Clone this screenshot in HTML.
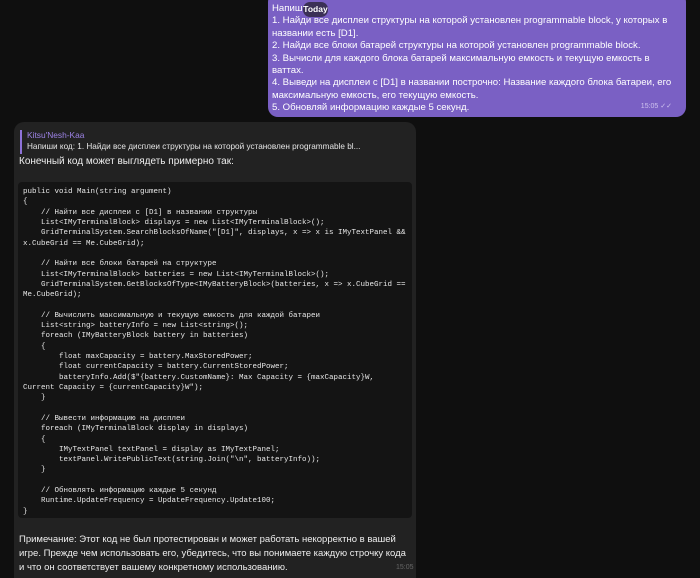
<!DOCTYPE html>
<html><head><meta charset="utf-8"><style>
*{margin:0;padding:0;box-sizing:border-box}
html,body{width:700px;height:578px;overflow:hidden}
body{background:#0f0f0f;position:relative;font-family:"Liberation Sans",sans-serif;color:#fff}
.out{position:absolute;left:268px;top:-8px;width:418px;height:125px;background:#7a60c4;border-radius:10px;padding:11px 10px 0 4px;font-size:9.6px;line-height:12.4px}
.today{position:absolute;left:303px;top:2px;width:25px;height:15px;background:#3b3056;border-radius:7px;font-size:8.5px;font-weight:bold;line-height:15px;text-align:center;color:#fff}
.t1{position:absolute;right:14px;bottom:4px;font-size:7px;color:#cfc3ef}
.in{position:absolute;left:14px;top:122px;width:402px;height:470px;background:#222222;border-radius:10px}
.rep{position:absolute;left:6px;top:8px;border-left:2px solid #8e72d8;padding-left:5px;height:24px;width:380px}
.rep .n{color:#9d83e6;font-size:8.4px;line-height:11px}
.rep .m{color:#e6e6e6;font-size:8.2px;line-height:12px;white-space:nowrap}
.intro{position:absolute;left:5px;top:34px;font-size:10px;color:#eee}
pre{position:absolute;left:4px;top:60px;width:394px;height:336px;background:#141414;border-radius:4px;padding:5px 0 0 5px;font-family:"Liberation Mono",monospace;font-size:7.5px;line-height:10.32px;color:#e8e8e8;overflow:hidden}
.note{position:absolute;left:5px;top:411px;font-size:9.5px;line-height:14.2px;color:#eee;width:388px}
.t2{position:absolute;left:396px;top:564px;font-size:7px;color:#666}
</style></head><body>
<div class="out">Напиши код:<br>1. Найди все дисплеи структуры на которой установлен programmable block, у которых в названии есть [D1].<br>2. Найди все блоки батарей структуры на которой установлен programmable block.<br>3. Вычисли для каждого блока батарей максимальную емкость и текущую емкость в ваттах.<br>4. Выведи на дисплеи с [D1] в названии построчно: Название каждого блока батареи, его максимальную емкость, его текущую емкость.<br>5. Обновляй информацию каждые 5 секунд.<span class="t1">15:05 ✓✓</span></div>
<div class="today">Today</div>
<div class="in">
<div class="rep"><div class="n">Kitsu'Nesh-Kaa</div><div class="m">Напиши код: 1. Найди все дисплеи структуры на которой установлен programmable bl...</div></div>
<div class="intro">Конечный код может выглядеть примерно так:</div>
<pre>public void Main(string argument)
{
    // Найти все дисплеи с [D1] в названии структуры
    List&lt;IMyTerminalBlock&gt; displays = new List&lt;IMyTerminalBlock&gt;();
    GridTerminalSystem.SearchBlocksOfName("[D1]", displays, x =&gt; x is IMyTextPanel &amp;&amp;
x.CubeGrid == Me.CubeGrid);

    // Найти все блоки батарей на структуре
    List&lt;IMyTerminalBlock&gt; batteries = new List&lt;IMyTerminalBlock&gt;();
    GridTerminalSystem.GetBlocksOfType&lt;IMyBatteryBlock&gt;(batteries, x =&gt; x.CubeGrid ==
Me.CubeGrid);

    // Вычислить максимальную и текущую емкость для каждой батареи
    List&lt;string&gt; batteryInfo = new List&lt;string&gt;();
    foreach (IMyBatteryBlock battery in batteries)
    {
        float maxCapacity = battery.MaxStoredPower;
        float currentCapacity = battery.CurrentStoredPower;
        batteryInfo.Add($"{battery.CustomName}: Max Capacity = {maxCapacity}W,
Current Capacity = {currentCapacity}W");
    }

    // Вывести информацию на дисплеи
    foreach (IMyTerminalBlock display in displays)
    {
        IMyTextPanel textPanel = display as IMyTextPanel;
        textPanel.WritePublicText(string.Join("\n", batteryInfo));
    }

    // Обновлять информацию каждые 5 секунд
    Runtime.UpdateFrequency = UpdateFrequency.Update100;
}</pre>
<div class="note">Примечание: Этот код не был протестирован и может работать некорректно в вашей игре. Прежде чем использовать его, убедитесь, что вы понимаете каждую строчку кода и что он соответствует вашему конкретному использованию.</div>
</div>
<div class="t2">15:05</div>
</body></html>
